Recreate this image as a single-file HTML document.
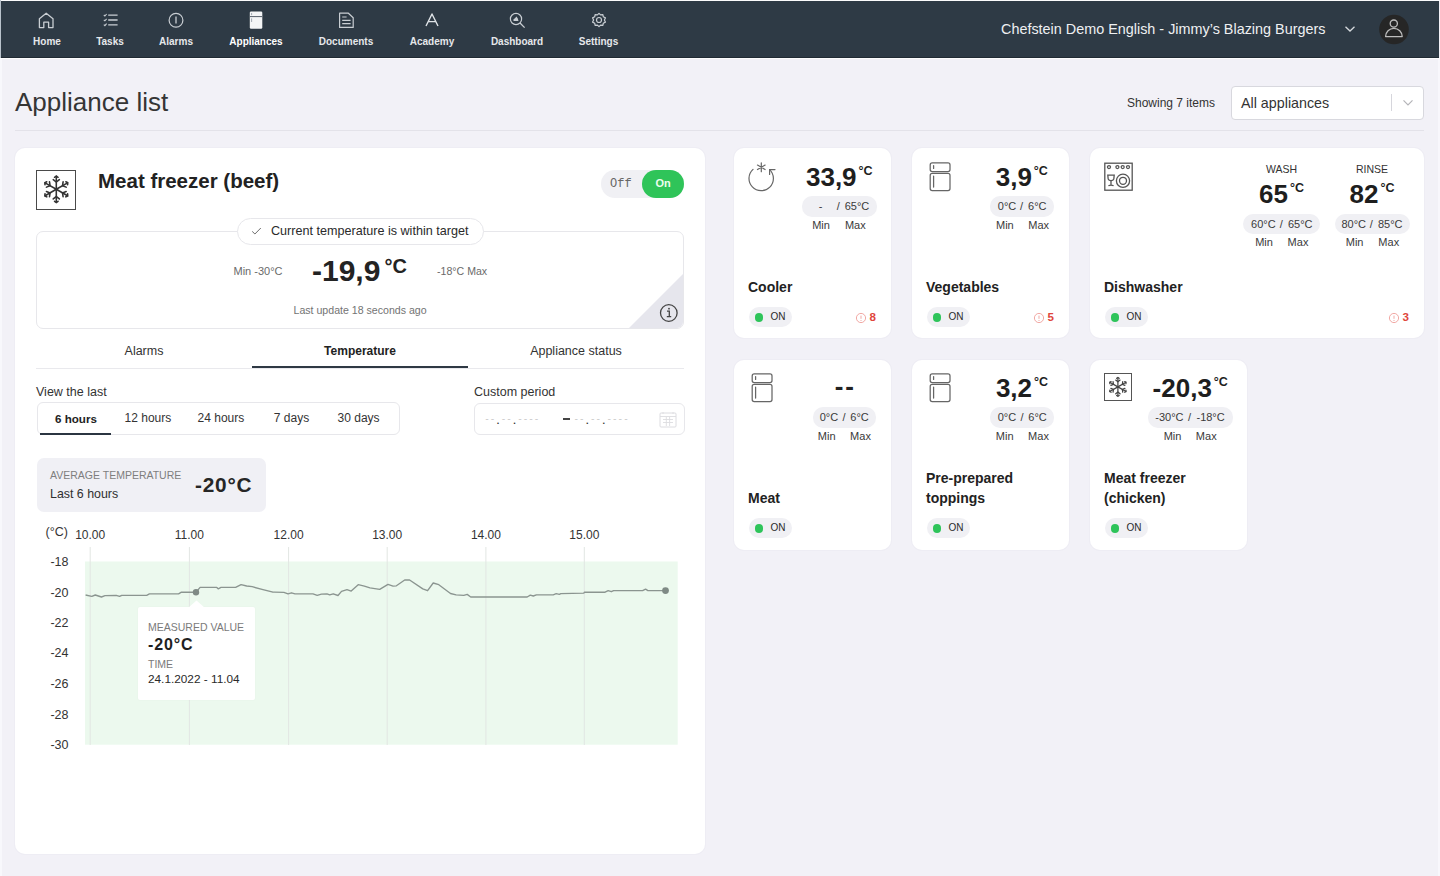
<!DOCTYPE html>
<html><head><meta charset="utf-8">
<style>
*{margin:0;padding:0;box-sizing:border-box}
html,body{width:1440px;height:876px;overflow:hidden}
body{background:#f2f1f7;font-family:"Liberation Sans",sans-serif;color:#262626;position:relative}
.a{position:absolute;white-space:nowrap}
#edge-l{left:0;top:58px;width:1.5px;height:818px;background:#f8f8fc}
#edge-r{left:1438px;top:58px;width:2px;height:818px;background:#f8f7fc}
#edge-l2{left:0;top:0;width:1px;height:58px;background:#b9c2cb}
#nav{left:1px;top:1px;width:1438px;height:57px;background:#2e3a45;border-bottom:1px solid #202a33}
#topw{left:0;top:0;width:1440px;height:1px;background:#fbfbfc}
#navline{left:0;top:58px;width:1440px;height:1px;background:#fcfcfd}
.ni{position:absolute;top:0;height:57px;text-align:center;color:#e3e6e9;font-size:10px;font-weight:700}
.ni svg{position:absolute;left:50%;top:11px;transform:translateX(-50%)}
.ni span{position:absolute;left:0;right:0;top:35px}
.card{position:absolute;background:#fff;border-radius:10px;box-shadow:0 0 0 1px rgba(40,30,90,0.018)}
.lbl{font-size:10.5px;color:#555}
</style></head>
<body>
<div class="a" id="topw"></div>
<div class="a" id="nav"></div>
<div class="a" id="edge-l"></div><div class="a" id="edge-r"></div><div class="a" id="edge-l2"></div>
<div class="a" id="navline"></div>


<!-- nav items -->
<svg class="a" style="left:38px;top:12px" width="17" height="17" viewBox="0 0 17 17"><path d="M1.4 6.8 L8.2 1.2 L15 6.8 V15.6 H10.6 V10.2 H5.8 V15.6 H1.4 Z" fill="none" stroke="#c9ced3" stroke-width="1.3" stroke-linejoin="round"/></svg>
<div class="a" style="left:33px;top:37.3px;font-size:10px;line-height:10px;font-weight:700;color:#e6e8eb;width:28px;text-align:center">Home</div>

<svg class="a" style="left:103px;top:13px" width="16" height="14" viewBox="0 0 16 14"><path d="M5.2 2.2 H14.6 M5.2 7 H14.6 M5.2 11.8 H14.6" stroke="#c9ced3" stroke-width="1.3"/><path d="M0.8 2 L1.9 3 L3.6 1 M0.8 6.8 L1.9 7.8 L3.6 5.8 M0.8 11.6 L1.9 12.6 L3.6 10.6" fill="none" stroke="#c9ced3" stroke-width="1.1"/></svg>
<div class="a" style="left:96px;top:37.3px;font-size:10px;line-height:10px;font-weight:700;color:#e6e8eb;width:28px;text-align:center">Tasks</div>

<svg class="a" style="left:168px;top:12px" width="16" height="16" viewBox="0 0 16 16"><circle cx="8" cy="8.2" r="6.9" fill="none" stroke="#c9ced3" stroke-width="1.2"/><path d="M8 4.6 V11.6" stroke="#c9ced3" stroke-width="1.3"/></svg>
<div class="a" style="left:156px;top:37.3px;font-size:10px;line-height:10px;font-weight:700;color:#e6e8eb;width:40px;text-align:center">Alarms</div>

<svg class="a" style="left:249px;top:11px" width="14" height="19" viewBox="0 0 14 19"><rect x="0.8" y="0.5" width="12.5" height="17.3" rx="1.3" fill="#f4f5f6"/><path d="M1 5.6 H13" stroke="#2d3945" stroke-width="0.8"/><path d="M2.6 2 V4.2 M2.6 7.4 V11" stroke="#9aa3ab" stroke-width="0.9"/></svg>
<div class="a" style="left:226px;top:37.3px;font-size:10px;line-height:10px;font-weight:700;color:#ffffff;width:60px;text-align:center">Appliances</div>

<svg class="a" style="left:338px;top:12px" width="17" height="17" viewBox="0 0 17 17"><path d="M1.6 1.2 H10.4 L15.2 5.8 V15.4 H1.6 Z" fill="none" stroke="#c9ced3" stroke-width="1.2" stroke-linejoin="round"/><path d="M4.2 5 H8.6 M4.2 8.4 H12.6 M4.2 11.6 H12.6" stroke="#c9ced3" stroke-width="1.2"/></svg>
<div class="a" style="left:316px;top:37.3px;font-size:10px;line-height:10px;font-weight:700;color:#e6e8eb;width:60px;text-align:center">Documents</div>

<svg class="a" style="left:425px;top:13px" width="14" height="14" viewBox="0 0 14 14"><path d="M1 13 L7 1 L13 13 M3.4 8.6 H10.6" fill="none" stroke="#dfe3e7" stroke-width="1.4" stroke-linejoin="round"/></svg>
<div class="a" style="left:404px;top:37.3px;font-size:10px;line-height:10px;font-weight:700;color:#e6e8eb;width:56px;text-align:center">Academy</div>

<svg class="a" style="left:509px;top:12px" width="17" height="17" viewBox="0 0 17 17"><circle cx="7" cy="7" r="5.6" fill="none" stroke="#c9ced3" stroke-width="1.2"/><path d="M11 11 L15.6 15.6" stroke="#c9ced3" stroke-width="1.3"/><path d="M4.5 9 V7.2 L6 6.2 L7.4 4.6 L8.8 6.5 L9.5 9 Z" fill="#c9ced3"/></svg>
<div class="a" style="left:487px;top:37.3px;font-size:10px;line-height:10px;font-weight:700;color:#e6e8eb;width:60px;text-align:center">Dashboard</div>

<svg class="a" style="left:591px;top:12px" width="16" height="16" viewBox="0 0 16 16"><path d="M8 1.3 L9.6 2.9 L11.9 2.6 L12.3 4.8 L14.4 5.9 L13.4 8 L14.4 10.1 L12.3 11.2 L11.9 13.4 L9.6 13.1 L8 14.7 L6.4 13.1 L4.1 13.4 L3.7 11.2 L1.6 10.1 L2.6 8 L1.6 5.9 L3.7 4.8 L4.1 2.6 L6.4 2.9 Z" fill="none" stroke="#c9ced3" stroke-width="1.2" stroke-linejoin="round"/><circle cx="8" cy="8" r="2.5" fill="none" stroke="#c9ced3" stroke-width="1.2"/></svg>
<div class="a" style="left:578px;top:37.3px;font-size:10px;line-height:10px;font-weight:700;color:#e6e8eb;width:41px;text-align:center">Settings</div>

<div class="a" style="left:1001px;top:21.5px;font-size:14.4px;line-height:14.4px;color:#eef0f2">Chefstein Demo English - Jimmy’s Blazing Burgers</div>
<svg class="a" style="left:1344px;top:25px" width="12" height="8" viewBox="0 0 12 8"><path d="M1.5 1.8 L6 6 L10.5 1.8" fill="none" stroke="#d5d9dd" stroke-width="1.3"/></svg>
<svg class="a" style="left:1378px;top:14px" width="32" height="32" viewBox="0 0 32 32"><circle cx="16" cy="15.5" r="14.8" fill="#262626"/><circle cx="15.8" cy="9.6" r="3.6" fill="none" stroke="#bdbdbd" stroke-width="1.3"/><path d="M7.6 22.6 A8.3 8.3 0 0 1 24.2 22.6 Z" fill="none" stroke="#bdbdbd" stroke-width="1.3" stroke-linejoin="round"/></svg>

<!-- header -->
<div class="a" style="left:15px;top:86.5px;font-size:26px;color:#353535;line-height:30px">Appliance list</div>
<div class="a" style="left:15px;top:130px;width:1409px;height:1px;background:#e3e2e9"></div>
<div class="a" style="left:1127px;top:95.7px;font-size:12px;color:#333;line-height:14px">Showing 7 items</div>
<div class="a" style="left:1231px;top:86px;width:193px;height:33.5px;background:#fff;border:1px solid #d8d8de;border-radius:4px"></div>
<div class="a" style="left:1241px;top:94.5px;font-size:14.3px;color:#333;line-height:17px">All appliances</div>
<div class="a" style="left:1391px;top:94px;width:1px;height:17px;background:#d6d6dc"></div>
<svg class="a" style="left:1402px;top:99px" width="12" height="8" viewBox="0 0 12 8"><path d="M1.5 1.4 L6 6 L10.5 1.4" fill="none" stroke="#b4b4b8" stroke-width="1.2"/></svg>

<!-- main card -->
<div class="card" style="left:15px;top:148px;width:690px;height:706px"></div>


<!-- main card content -->
<div class="a" style="left:36px;top:170px;width:40px;height:40px;border:1.6px solid #4a4a4a"></div>
<svg class="a" style="left:41.099999999999994px;top:174.39999999999998px" width="30.6" height="30.6" viewBox="0 0 28 28"><g stroke="#333" stroke-width="1.45" fill="none" stroke-linecap="round"><g transform="rotate(0 14 14)"><path d="M14 14 V2.6"/><path d="M11.2 5.2 L14 7.4 L16.8 5.2"/><path d="M12.4 3 L14 1.9 L15.6 3"/></g><g transform="rotate(60 14 14)"><path d="M14 14 V2.6"/><path d="M11.2 5.2 L14 7.4 L16.8 5.2"/><path d="M12.4 3 L14 1.9 L15.6 3"/></g><g transform="rotate(120 14 14)"><path d="M14 14 V2.6"/><path d="M11.2 5.2 L14 7.4 L16.8 5.2"/><path d="M12.4 3 L14 1.9 L15.6 3"/></g><g transform="rotate(180 14 14)"><path d="M14 14 V2.6"/><path d="M11.2 5.2 L14 7.4 L16.8 5.2"/><path d="M12.4 3 L14 1.9 L15.6 3"/></g><g transform="rotate(240 14 14)"><path d="M14 14 V2.6"/><path d="M11.2 5.2 L14 7.4 L16.8 5.2"/><path d="M12.4 3 L14 1.9 L15.6 3"/></g><g transform="rotate(300 14 14)"><path d="M14 14 V2.6"/><path d="M11.2 5.2 L14 7.4 L16.8 5.2"/><path d="M12.4 3 L14 1.9 L15.6 3"/></g></g><circle cx="14" cy="14" r="1.3" fill="#333"/></svg>
<div class="a" style="left:98px;top:171px;font-size:20.5px;line-height:20.5px;font-weight:700;color:#222">Meat freezer (beef)</div>

<div class="a" style="left:600.5px;top:170px;width:83.5px;height:27.5px;background:#f0f0f4;border-radius:14px"></div>
<div class="a" style="left:642.3px;top:170px;width:41.7px;height:27.5px;background:#2fc459;border-radius:14px"></div>
<div class="a" style="left:610px;top:177.8px;font-family:'Liberation Mono',monospace;font-size:12px;line-height:12px;color:#666">Off</div>
<div class="a" style="left:655.5px;top:178.2px;font-size:11px;line-height:11px;font-weight:700;color:#ecfdef">On</div>

<div class="a" style="left:36px;top:231px;width:648px;height:98px;border:1px solid #e7e7eb;border-radius:7px;overflow:hidden">
 <svg style="position:absolute;right:0;bottom:0" width="54" height="54" viewBox="0 0 54 54"><path d="M54 0 V54 H0 Z" fill="#e6e6ed"/></svg>
</div>
<svg class="a" style="left:658px;top:302px" width="22" height="22" viewBox="0 0 22 22"><circle cx="10.8" cy="11" r="8.3" fill="none" stroke="#444" stroke-width="1.3"/><path d="M9 9.2 H11.3 V14.6 M8.8 14.6 H13.2" fill="none" stroke="#444" stroke-width="1.3"/><circle cx="11" cy="6.7" r="0.9" fill="#444"/></svg>
<div class="a" style="left:237px;top:218px;width:247px;height:27px;background:#fff;border:1px solid #e7e7eb;border-radius:14px"></div>
<svg class="a" style="left:250px;top:225px" width="13" height="12" viewBox="0 0 13 12"><path d="M2.2 6.4 L4.9 9 L10.8 3" fill="none" stroke="#6a6a6a" stroke-width="1"/></svg>
<div class="a" style="left:271px;top:225px;font-size:12.6px;line-height:12.6px;color:#2a2a2a">Current temperature is within target</div>

<div class="a" style="left:233.5px;top:265.7px;font-size:11px;line-height:11px;color:#6a6a6a">Min -30°C</div>
<div class="a" style="left:312px;top:256.2px;font-size:30px;line-height:30px;font-weight:700;color:#232323">-19,9</div>
<div class="a" style="left:384.5px;top:256px;font-size:20px;line-height:20px;font-weight:700;color:#232323">°C</div>
<div class="a" style="left:437px;top:265.7px;font-size:10.6px;line-height:11px;color:#6a6a6a">-18°C Max</div>
<div class="a" style="left:293.5px;top:304.5px;font-size:10.6px;line-height:10.6px;color:#737373">Last update 18 seconds ago</div>

<!-- tabs -->
<div class="a" style="left:36px;top:368px;width:648px;height:1px;background:#e9e9ed"></div>
<div class="a" style="left:252px;top:366.3px;width:216px;height:2.2px;background:#2f3944"></div>
<div class="a" style="left:36px;top:345.3px;width:216px;text-align:center;font-size:12.5px;line-height:12.5px;color:#333">Alarms</div>
<div class="a" style="left:252px;top:345.3px;width:216px;text-align:center;font-size:12px;line-height:12.5px;font-weight:700;color:#222">Temperature</div>
<div class="a" style="left:468px;top:345.3px;width:216px;text-align:center;font-size:12.5px;line-height:12.5px;color:#333">Appliance status</div>

<div class="a" style="left:36px;top:385.8px;font-size:12.5px;line-height:12.5px;color:#333">View the last</div>
<div class="a" style="left:36.5px;top:402px;width:363px;height:33px;border:1px solid #e7e7eb;border-radius:6px"></div>
<div class="a" style="left:40px;top:432.5px;width:70.5px;height:2.5px;background:#2b3541"></div>
<div class="a" style="left:55px;top:412.6px;font-size:11.6px;line-height:11.6px;font-weight:700;color:#222">6 hours</div>
<div class="a" style="left:124.6px;top:412.1px;font-size:12px;line-height:12px;color:#333">12 hours</div>
<div class="a" style="left:197.6px;top:412.1px;font-size:12px;line-height:12px;color:#333">24 hours</div>
<div class="a" style="left:273.8px;top:412.1px;font-size:12px;line-height:12px;color:#333">7 days</div>
<div class="a" style="left:337.6px;top:412.1px;font-size:12px;line-height:12px;color:#333">30 days</div>

<div class="a" style="left:474px;top:385.8px;font-size:12.5px;line-height:12.5px;color:#333">Custom period</div>
<div class="a" style="left:474px;top:402.5px;width:210.5px;height:32.5px;border:1px solid #e7e7eb;border-radius:6px"></div>
<div class="a" style="left:484.2px;top:415px;font-family:'Liberation Mono',monospace;font-size:9.2px;line-height:10px;color:#c4c4c4">--<span style="color:#333;position:relative;top:1.6px;font-weight:700">.</span>--<span style="color:#333;position:relative;top:1.6px;font-weight:700">.</span>----</div>
<div class="a" style="left:563.3px;top:418px;width:6.5px;height:1.6px;background:#444"></div>
<div class="a" style="left:573.5px;top:415px;font-family:'Liberation Mono',monospace;font-size:9.2px;line-height:10px;color:#c4c4c4">--<span style="color:#333;position:relative;top:1.6px;font-weight:700">.</span>--<span style="color:#333;position:relative;top:1.6px;font-weight:700">.</span>----</div>
<svg class="a" style="left:659px;top:411px" width="18" height="17" viewBox="0 0 18 17"><rect x="1" y="2" width="16" height="14" rx="1" fill="none" stroke="#dcdce0" stroke-width="1"/><path d="M1 5.5 H17 M4 1 V3 M14 1 V3 M4 8.5 H14 M4 11.5 H14 M7.3 6 V15 M10.6 6 V15" stroke="#dcdce0" stroke-width="0.9"/></svg>

<!-- avg box -->
<div class="a" style="left:36.5px;top:457.5px;width:229.5px;height:54.5px;background:#f0f0f5;border-radius:7px"></div>
<div class="a" style="left:50px;top:469.8px;font-size:10.5px;line-height:10.5px;color:#7e7e7e">AVERAGE TEMPERATURE</div>
<div class="a" style="left:50px;top:487.8px;font-size:12.4px;line-height:12.4px;color:#2f2f2f">Last 6 hours</div>
<div class="a" style="left:195px;top:474.6px;font-size:20.8px;line-height:20.8px;font-weight:700;color:#262626;letter-spacing:0.8px">-20°C</div>


<!-- chart -->
<svg class="a" style="left:0;top:0" width="720" height="876" viewBox="0 0 720 876">
<rect x="85" y="561.5" width="592.7" height="183.2" fill="#ecf9ee"/>
<line x1="90.2" y1="547" x2="90.2" y2="745" stroke="#e2e6e3" stroke-width="1"/><line x1="189.4" y1="547" x2="189.4" y2="745" stroke="#e2e6e3" stroke-width="1"/><line x1="288.6" y1="547" x2="288.6" y2="745" stroke="#e2e6e3" stroke-width="1"/><line x1="387.2" y1="547" x2="387.2" y2="745" stroke="#e2e6e3" stroke-width="1"/><line x1="485.9" y1="547" x2="485.9" y2="745" stroke="#e2e6e3" stroke-width="1"/><line x1="584.3" y1="547" x2="584.3" y2="745" stroke="#e2e6e3" stroke-width="1"/>
<polyline points="85.6,595.0 91.8,596.4 95.3,595.0 101.5,597.0 105.0,595.7 116.1,595.3 119.6,596.4 121.7,595.3 146.7,595.3 149.4,593.9 178.6,593.9 181.4,592.2 196.0,592.2 200.1,587.4 216.8,587.4 218.2,588.8 221.0,587.4 235.6,587.4 241.1,584.6 246.7,586.0 252.2,586.7 262.0,589.4 273.0,592.2 274.2,592.1 283.9,592.4 288.0,593.8 291.5,592.8 295.0,593.8 313.0,593.8 317.2,595.3 321.4,594.2 327.0,593.9 329.7,594.9 333.2,593.8 338.0,595.5 341.5,591.4 347.0,589.7 351.2,591.1 358.2,584.7 364.4,586.1 370.0,587.9 379.7,589.3 388.0,584.4 393.0,586.1 396.4,585.8 404.7,580.0 409.6,580.0 422.8,588.9 427.6,590.7 433.2,583.0 438.8,584.7 450.5,593.5 456.1,594.9 463.8,595.3 467.2,594.4 470.7,597.0 527.2,597.0 530.3,595.2 533.3,596.0 536.4,594.8 553.2,594.8 556.2,593.7 559.3,594.4 560.8,593.7 583.8,593.2 584.5,592.2 605.1,592.2 608.2,590.6 611.3,591.7 613.6,590.6 642.6,590.6 645.6,589.1 647.9,590.6 665.5,590.6" fill="none" stroke="#8b9590" stroke-width="1.35" stroke-linejoin="round"/>
<circle cx="196" cy="592.2" r="3.2" fill="#7f8a85"/>
<circle cx="665.5" cy="590.6" r="3.4" fill="#7f8a85"/>
</svg>
<div class="a" style="left:45.5px;top:525.7px;font-size:12.5px;line-height:12px;color:#333">(°C)</div>
<div class="a" style="left:60.2px;top:529px;width:60px;text-align:center;font-size:12px;line-height:12px;color:#333">10.00</div><div class="a" style="left:159.4px;top:529px;width:60px;text-align:center;font-size:12px;line-height:12px;color:#333">11.00</div><div class="a" style="left:258.6px;top:529px;width:60px;text-align:center;font-size:12px;line-height:12px;color:#333">12.00</div><div class="a" style="left:357.2px;top:529px;width:60px;text-align:center;font-size:12px;line-height:12px;color:#333">13.00</div><div class="a" style="left:455.9px;top:529px;width:60px;text-align:center;font-size:12px;line-height:12px;color:#333">14.00</div><div class="a" style="left:554.3px;top:529px;width:60px;text-align:center;font-size:12px;line-height:12px;color:#333">15.00</div>
<div class="a" style="left:28px;top:556.4px;width:40.5px;text-align:right;font-size:12.5px;line-height:12.5px;color:#333">-18</div><div class="a" style="left:28px;top:586.5px;width:40.5px;text-align:right;font-size:12.5px;line-height:12.5px;color:#333">-20</div><div class="a" style="left:28px;top:616.5px;width:40.5px;text-align:right;font-size:12.5px;line-height:12.5px;color:#333">-22</div><div class="a" style="left:28px;top:647.3px;width:40.5px;text-align:right;font-size:12.5px;line-height:12.5px;color:#333">-24</div><div class="a" style="left:28px;top:678.0px;width:40.5px;text-align:right;font-size:12.5px;line-height:12.5px;color:#333">-26</div><div class="a" style="left:28px;top:708.5px;width:40.5px;text-align:right;font-size:12.5px;line-height:12.5px;color:#333">-28</div><div class="a" style="left:28px;top:738.9px;width:40.5px;text-align:right;font-size:12.5px;line-height:12.5px;color:#333">-30</div>
<div class="a" style="left:137.5px;top:607px;width:117.5px;height:93px;background:#fff;border-radius:2px;box-shadow:0 0 2px rgba(0,0,0,0.04)"></div>
<svg class="a" style="left:188px;top:600px" width="17" height="8" viewBox="0 0 17 8"><path d="M0 8 L8.5 0.5 L17 8 Z" fill="#fff"/></svg>
<div class="a" style="left:148px;top:621.5px;font-size:10.5px;line-height:10.5px;color:#7a7a7a">MEASURED VALUE</div>
<div class="a" style="left:148px;top:637px;font-size:16px;line-height:16px;font-weight:700;color:#1f1f1f;letter-spacing:0.9px">-20°C</div>
<div class="a" style="left:148px;top:659.3px;font-size:10.5px;line-height:10.5px;color:#7a7a7a">TIME</div>
<div class="a" style="left:148px;top:674px;font-size:11.8px;line-height:11.8px;color:#2a2a2a">24.1.2022 - 11.04</div>

<!-- right cards -->
<div class="card" style="left:734px;top:148px;width:157px;height:190px"></div>
<div class="card" style="left:912px;top:148px;width:157px;height:190px"></div>
<div class="card" style="left:1090px;top:148px;width:334px;height:190px"></div>
<div class="card" style="left:734px;top:360px;width:157px;height:190px"></div>
<div class="card" style="left:912px;top:360px;width:157px;height:190px"></div>
<div class="card" style="left:1090px;top:360px;width:157px;height:190px"></div>

<!-- card contents -->
<svg class="a" style="left:747px;top:158px" width="32" height="34" viewBox="0 0 32 34"><g fill="none" stroke="#666" stroke-width="1.2" stroke-linecap="round">
<path d="M6.0 11.4 A12.2 12.2 0 1 0 22.6 11.6"/><path d="M22.6 11.6 H28 M22.6 11.6 V16.4"/>
<path d="M14.3 4.9 V13.7 M10.5 7.1 L18.1 11.5 M10.5 11.5 L18.1 7.1"/></g></svg>
<div class="a" style="left:779.3px;top:163.5px;width:120px;text-align:center;color:#1e1e1e;line-height:26px"><span style="font-size:26px;font-weight:700">33,9</span><span style="font-size:12.5px;font-weight:700;position:relative;top:-11px;margin-left:2px">°C</span></div>
<div class="a" style="left:801.5999999999999px;top:196.4px;width:75.4px;height:20.2px;background:#f0f0f4;border-radius:10px"></div>
<div class="a" style="left:760.5px;top:201.3px;width:120px;text-align:center;font-size:11px;line-height:11px;color:#3a3a3a">-</div>
<div class="a" style="left:778.2px;top:201.3px;width:120px;text-align:center;font-size:11px;line-height:11px;color:#3a3a3a">/</div>
<div class="a" style="left:797px;top:201.3px;width:120px;text-align:center;font-size:11px;line-height:11px;color:#3a3a3a">65°C</div>
<div class="a" style="left:761px;top:220.2px;width:120px;text-align:center;font-size:11px;line-height:11px;color:#3a3a3a">Min</div>
<div class="a" style="left:795.3px;top:220.2px;width:120px;text-align:center;font-size:11px;line-height:11px;color:#3a3a3a">Max</div>
<div class="a" style="left:748px;top:280.2px;font-size:14px;line-height:14px;font-weight:700;color:#222">Cooler</div>
<div class="a" style="left:748.5px;top:307.3px;width:43.5px;height:20px;background:#f0f0f4;border-radius:10px"></div>
<div class="a" style="left:754.6px;top:312.8px;width:8.8px;height:8.8px;background:#2ec45a;border-radius:50%"></div>
<div class="a" style="left:770.5px;top:312.3px;font-size:10px;line-height:10px;color:#2a2a2a">ON</div>
<svg class="a" style="left:855px;top:312px" width="12" height="12" viewBox="0 0 12 12"><circle cx="6" cy="6" r="4.6" fill="none" stroke="#ef9a95" stroke-width="0.85"/><path d="M6 3.6 V6.8" stroke="#ef9a95" stroke-width="0.85"/><circle cx="6" cy="8.4" r="0.5" fill="#ea8f8a"/></svg>
<div class="a" style="left:869.5px;top:311.3px;font-size:11.6px;line-height:11.6px;font-weight:700;color:#e0463c">8</div>
<svg class="a" style="left:928.6px;top:162px" width="24" height="30" viewBox="0 0 24 30"><g fill="none" stroke="#666" stroke-width="1.25">
<rect x="1.2" y="0.9" width="19.8" height="8.6" rx="2"/><rect x="1.2" y="11.4" width="19.8" height="17.2" rx="2"/><path d="M4.6 3.6 V6.4 M4.6 14.2 V25" stroke-linecap="round"/></g></svg>
<div class="a" style="left:961.8px;top:163.5px;width:120px;text-align:center;color:#1e1e1e;line-height:26px"><span style="font-size:26px;font-weight:700">3,9</span><span style="font-size:12.5px;font-weight:700;position:relative;top:-11px;margin-left:2px">°C</span></div>
<div class="a" style="left:990.0px;top:196.4px;width:63.6px;height:20.2px;background:#f0f0f4;border-radius:10px"></div>
<div class="a" style="left:947px;top:201.3px;width:120px;text-align:center;font-size:11px;line-height:11px;color:#3a3a3a">0°C</div>
<div class="a" style="left:961.6px;top:201.3px;width:120px;text-align:center;font-size:11px;line-height:11px;color:#3a3a3a">/</div>
<div class="a" style="left:977.3px;top:201.3px;width:120px;text-align:center;font-size:11px;line-height:11px;color:#3a3a3a">6°C</div>
<div class="a" style="left:944.9px;top:220.2px;width:120px;text-align:center;font-size:11px;line-height:11px;color:#3a3a3a">Min</div>
<div class="a" style="left:978.7px;top:220.2px;width:120px;text-align:center;font-size:11px;line-height:11px;color:#3a3a3a">Max</div>
<div class="a" style="left:926px;top:280.2px;font-size:14px;line-height:14px;font-weight:700;color:#222">Vegetables</div>
<div class="a" style="left:926.5px;top:307.3px;width:43.5px;height:20px;background:#f0f0f4;border-radius:10px"></div>
<div class="a" style="left:932.6px;top:312.8px;width:8.8px;height:8.8px;background:#2ec45a;border-radius:50%"></div>
<div class="a" style="left:948.5px;top:312.3px;font-size:10px;line-height:10px;color:#2a2a2a">ON</div>
<svg class="a" style="left:1033px;top:312px" width="12" height="12" viewBox="0 0 12 12"><circle cx="6" cy="6" r="4.6" fill="none" stroke="#ef9a95" stroke-width="0.85"/><path d="M6 3.6 V6.8" stroke="#ef9a95" stroke-width="0.85"/><circle cx="6" cy="8.4" r="0.5" fill="#ea8f8a"/></svg>
<div class="a" style="left:1047.5px;top:311.3px;font-size:11.6px;line-height:11.6px;font-weight:700;color:#e0463c">5</div>
<svg class="a" style="left:1104px;top:162px" width="30" height="30" viewBox="0 0 30 30"><g fill="none" stroke="#555" stroke-width="1.3">
<rect x="0.8" y="1.2" width="27.4" height="27" /><circle cx="5" cy="5.1" r="1.5"/><circle cx="13.4" cy="5.1" r="1.5"/><circle cx="18.7" cy="5.1" r="1.5"/><circle cx="24" cy="5.1" r="1.5"/>
<path d="M3.8 13.2 H10.2 L9.8 17 Q9.2 18.6 7 18.6 Q4.8 18.6 4.2 17 Z"/><path d="M7 18.6 V23.4 M4.4 23.8 Q7 22.4 9.6 23.8"/>
<circle cx="19" cy="18.8" r="6.6"/><circle cx="19" cy="18.8" r="3.5"/></g></svg>
<div class="a" style="left:1221.5px;top:164.3px;width:120px;text-align:center;font-size:10.5px;line-height:10.5px;color:#333">WASH</div>
<div class="a" style="left:1221.5px;top:180.7px;width:120px;text-align:center;color:#1e1e1e;line-height:26px"><span style="font-size:26px;font-weight:700">65</span><span style="font-size:12.5px;font-weight:700;position:relative;top:-11px;margin-left:2px">°C</span></div>
<div class="a" style="left:1243.0px;top:213.6px;width:77px;height:20.2px;background:#f0f0f4;border-radius:10px"></div>
<div class="a" style="left:1203.4px;top:218.5px;width:120px;text-align:center;font-size:11px;line-height:11px;color:#3a3a3a">60°C</div>
<div class="a" style="left:1221.25px;top:218.5px;width:120px;text-align:center;font-size:11px;line-height:11px;color:#3a3a3a">/</div>
<div class="a" style="left:1240.25px;top:218.5px;width:120px;text-align:center;font-size:11px;line-height:11px;color:#3a3a3a">65°C</div>
<div class="a" style="left:1204px;top:237.39999999999998px;width:120px;text-align:center;font-size:11px;line-height:11px;color:#3a3a3a">Min</div>
<div class="a" style="left:1238px;top:237.39999999999998px;width:120px;text-align:center;font-size:11px;line-height:11px;color:#3a3a3a">Max</div>
<div class="a" style="left:1312px;top:164.3px;width:120px;text-align:center;font-size:10.5px;line-height:10.5px;color:#333">RINSE</div>
<div class="a" style="left:1312px;top:180.7px;width:120px;text-align:center;color:#1e1e1e;line-height:26px"><span style="font-size:26px;font-weight:700">82</span><span style="font-size:12.5px;font-weight:700;position:relative;top:-11px;margin-left:2px">°C</span></div>
<div class="a" style="left:1334.5px;top:213.6px;width:75px;height:20.2px;background:#f0f0f4;border-radius:10px"></div>
<div class="a" style="left:1293.75px;top:218.5px;width:120px;text-align:center;font-size:11px;line-height:11px;color:#3a3a3a">80°C</div>
<div class="a" style="left:1311.25px;top:218.5px;width:120px;text-align:center;font-size:11px;line-height:11px;color:#3a3a3a">/</div>
<div class="a" style="left:1330.25px;top:218.5px;width:120px;text-align:center;font-size:11px;line-height:11px;color:#3a3a3a">85°C</div>
<div class="a" style="left:1294.6px;top:237.39999999999998px;width:120px;text-align:center;font-size:11px;line-height:11px;color:#3a3a3a">Min</div>
<div class="a" style="left:1328.75px;top:237.39999999999998px;width:120px;text-align:center;font-size:11px;line-height:11px;color:#3a3a3a">Max</div>
<div class="a" style="left:1104px;top:280.2px;font-size:14px;line-height:14px;font-weight:700;color:#222">Dishwasher</div>
<div class="a" style="left:1104.5px;top:307.3px;width:43.5px;height:20px;background:#f0f0f4;border-radius:10px"></div>
<div class="a" style="left:1110.6px;top:312.8px;width:8.8px;height:8.8px;background:#2ec45a;border-radius:50%"></div>
<div class="a" style="left:1126.5px;top:312.3px;font-size:10px;line-height:10px;color:#2a2a2a">ON</div>
<svg class="a" style="left:1388px;top:312px" width="12" height="12" viewBox="0 0 12 12"><circle cx="6" cy="6" r="4.6" fill="none" stroke="#ef9a95" stroke-width="0.85"/><path d="M6 3.6 V6.8" stroke="#ef9a95" stroke-width="0.85"/><circle cx="6" cy="8.4" r="0.5" fill="#ea8f8a"/></svg>
<div class="a" style="left:1402.5px;top:311.3px;font-size:11.6px;line-height:11.6px;font-weight:700;color:#e0463c">3</div>
<svg class="a" style="left:750.6px;top:373px" width="24" height="30" viewBox="0 0 24 30"><g fill="none" stroke="#666" stroke-width="1.25">
<rect x="1.2" y="0.9" width="19.8" height="8.6" rx="2"/><rect x="1.2" y="11.4" width="19.8" height="17.2" rx="2"/><path d="M4.6 3.6 V6.4 M4.6 14.2 V25" stroke-linecap="round"/></g></svg>
<div class="a" style="left:785.35px;top:372.5px;width:120px;text-align:center;font-size:26px;line-height:26px;font-weight:700;color:#222;letter-spacing:2px">--</div>
<div class="a" style="left:812.5px;top:407.4px;width:63.7px;height:20.2px;background:#f0f0f4;border-radius:10px"></div>
<div class="a" style="left:768.9px;top:412.3px;width:120px;text-align:center;font-size:11px;line-height:11px;color:#3a3a3a">0°C</div>
<div class="a" style="left:784.1px;top:412.3px;width:120px;text-align:center;font-size:11px;line-height:11px;color:#3a3a3a">/</div>
<div class="a" style="left:799.5px;top:412.3px;width:120px;text-align:center;font-size:11px;line-height:11px;color:#3a3a3a">6°C</div>
<div class="a" style="left:766.7px;top:431.2px;width:120px;text-align:center;font-size:11px;line-height:11px;color:#3a3a3a">Min</div>
<div class="a" style="left:800.5px;top:431.2px;width:120px;text-align:center;font-size:11px;line-height:11px;color:#3a3a3a">Max</div>
<div class="a" style="left:748px;top:491.2px;font-size:14px;line-height:14px;font-weight:700;color:#222">Meat</div>
<div class="a" style="left:748.5px;top:518.3px;width:43.5px;height:20px;background:#f0f0f4;border-radius:10px"></div>
<div class="a" style="left:754.6px;top:523.8px;width:8.8px;height:8.8px;background:#2ec45a;border-radius:50%"></div>
<div class="a" style="left:770.5px;top:523.3px;font-size:10px;line-height:10px;color:#2a2a2a">ON</div>
<svg class="a" style="left:928.6px;top:373px" width="24" height="30" viewBox="0 0 24 30"><g fill="none" stroke="#666" stroke-width="1.25">
<rect x="1.2" y="0.9" width="19.8" height="8.6" rx="2"/><rect x="1.2" y="11.4" width="19.8" height="17.2" rx="2"/><path d="M4.6 3.6 V6.4 M4.6 14.2 V25" stroke-linecap="round"/></g></svg>
<div class="a" style="left:962px;top:374.5px;width:120px;text-align:center;color:#1e1e1e;line-height:26px"><span style="font-size:26px;font-weight:700">3,2</span><span style="font-size:12.5px;font-weight:700;position:relative;top:-11px;margin-left:2px">°C</span></div>
<div class="a" style="left:990.4px;top:407.4px;width:63.2px;height:20.2px;background:#f0f0f4;border-radius:10px"></div>
<div class="a" style="left:946.9px;top:412.3px;width:120px;text-align:center;font-size:11px;line-height:11px;color:#3a3a3a">0°C</div>
<div class="a" style="left:962.1px;top:412.3px;width:120px;text-align:center;font-size:11px;line-height:11px;color:#3a3a3a">/</div>
<div class="a" style="left:977.5px;top:412.3px;width:120px;text-align:center;font-size:11px;line-height:11px;color:#3a3a3a">6°C</div>
<div class="a" style="left:944.7px;top:431.2px;width:120px;text-align:center;font-size:11px;line-height:11px;color:#3a3a3a">Min</div>
<div class="a" style="left:978.5px;top:431.2px;width:120px;text-align:center;font-size:11px;line-height:11px;color:#3a3a3a">Max</div>
<div class="a" style="left:926px;top:469.3px;font-size:14px;line-height:19.5px;font-weight:700;color:#222">Pre-prepared<br>toppings</div>
<div class="a" style="left:926.5px;top:518.3px;width:43.5px;height:20px;background:#f0f0f4;border-radius:10px"></div>
<div class="a" style="left:932.6px;top:523.8px;width:8.8px;height:8.8px;background:#2ec45a;border-radius:50%"></div>
<div class="a" style="left:948.5px;top:523.3px;font-size:10px;line-height:10px;color:#2a2a2a">ON</div>
<div class="a" style="left:1104px;top:373px;width:28px;height:27.5px;border:1.3px solid #555"></div><svg class="a" style="left:1107.2px;top:375.9px" width="21.8" height="21.8" viewBox="0 0 28 28"><g stroke="#444" stroke-width="1.6" fill="none" stroke-linecap="round"><g transform="rotate(0 14 14)"><path d="M14 14 V2.6"/><path d="M11.2 5.2 L14 7.4 L16.8 5.2"/><path d="M12.4 3 L14 1.9 L15.6 3"/></g><g transform="rotate(60 14 14)"><path d="M14 14 V2.6"/><path d="M11.2 5.2 L14 7.4 L16.8 5.2"/><path d="M12.4 3 L14 1.9 L15.6 3"/></g><g transform="rotate(120 14 14)"><path d="M14 14 V2.6"/><path d="M11.2 5.2 L14 7.4 L16.8 5.2"/><path d="M12.4 3 L14 1.9 L15.6 3"/></g><g transform="rotate(180 14 14)"><path d="M14 14 V2.6"/><path d="M11.2 5.2 L14 7.4 L16.8 5.2"/><path d="M12.4 3 L14 1.9 L15.6 3"/></g><g transform="rotate(240 14 14)"><path d="M14 14 V2.6"/><path d="M11.2 5.2 L14 7.4 L16.8 5.2"/><path d="M12.4 3 L14 1.9 L15.6 3"/></g><g transform="rotate(300 14 14)"><path d="M14 14 V2.6"/><path d="M11.2 5.2 L14 7.4 L16.8 5.2"/><path d="M12.4 3 L14 1.9 L15.6 3"/></g></g><circle cx="14" cy="14" r="1.3" fill="#444"/></svg>
<div class="a" style="left:1130.25px;top:374.5px;width:120px;text-align:center;color:#1e1e1e;line-height:26px"><span style="font-size:26px;font-weight:700">-20,3</span><span style="font-size:12.5px;font-weight:700;position:relative;top:-11px;margin-left:2px">°C</span></div>
<div class="a" style="left:1148.0px;top:407.4px;width:84.5px;height:20.2px;background:#f0f0f4;border-radius:10px"></div>
<div class="a" style="left:1109.4px;top:412.3px;width:120px;text-align:center;font-size:11px;line-height:11px;color:#3a3a3a">-30°C</div>
<div class="a" style="left:1129.5px;top:412.3px;width:120px;text-align:center;font-size:11px;line-height:11px;color:#3a3a3a">/</div>
<div class="a" style="left:1150.6px;top:412.3px;width:120px;text-align:center;font-size:11px;line-height:11px;color:#3a3a3a">-18°C</div>
<div class="a" style="left:1112.5px;top:431.2px;width:120px;text-align:center;font-size:11px;line-height:11px;color:#3a3a3a">Min</div>
<div class="a" style="left:1146.25px;top:431.2px;width:120px;text-align:center;font-size:11px;line-height:11px;color:#3a3a3a">Max</div>
<div class="a" style="left:1104px;top:469.3px;font-size:14px;line-height:19.5px;font-weight:700;color:#222">Meat freezer<br>(chicken)</div>
<div class="a" style="left:1104.5px;top:518.3px;width:43.5px;height:20px;background:#f0f0f4;border-radius:10px"></div>
<div class="a" style="left:1110.6px;top:523.8px;width:8.8px;height:8.8px;background:#2ec45a;border-radius:50%"></div>
<div class="a" style="left:1126.5px;top:523.3px;font-size:10px;line-height:10px;color:#2a2a2a">ON</div>
<!-- /card contents -->
</body></html>
